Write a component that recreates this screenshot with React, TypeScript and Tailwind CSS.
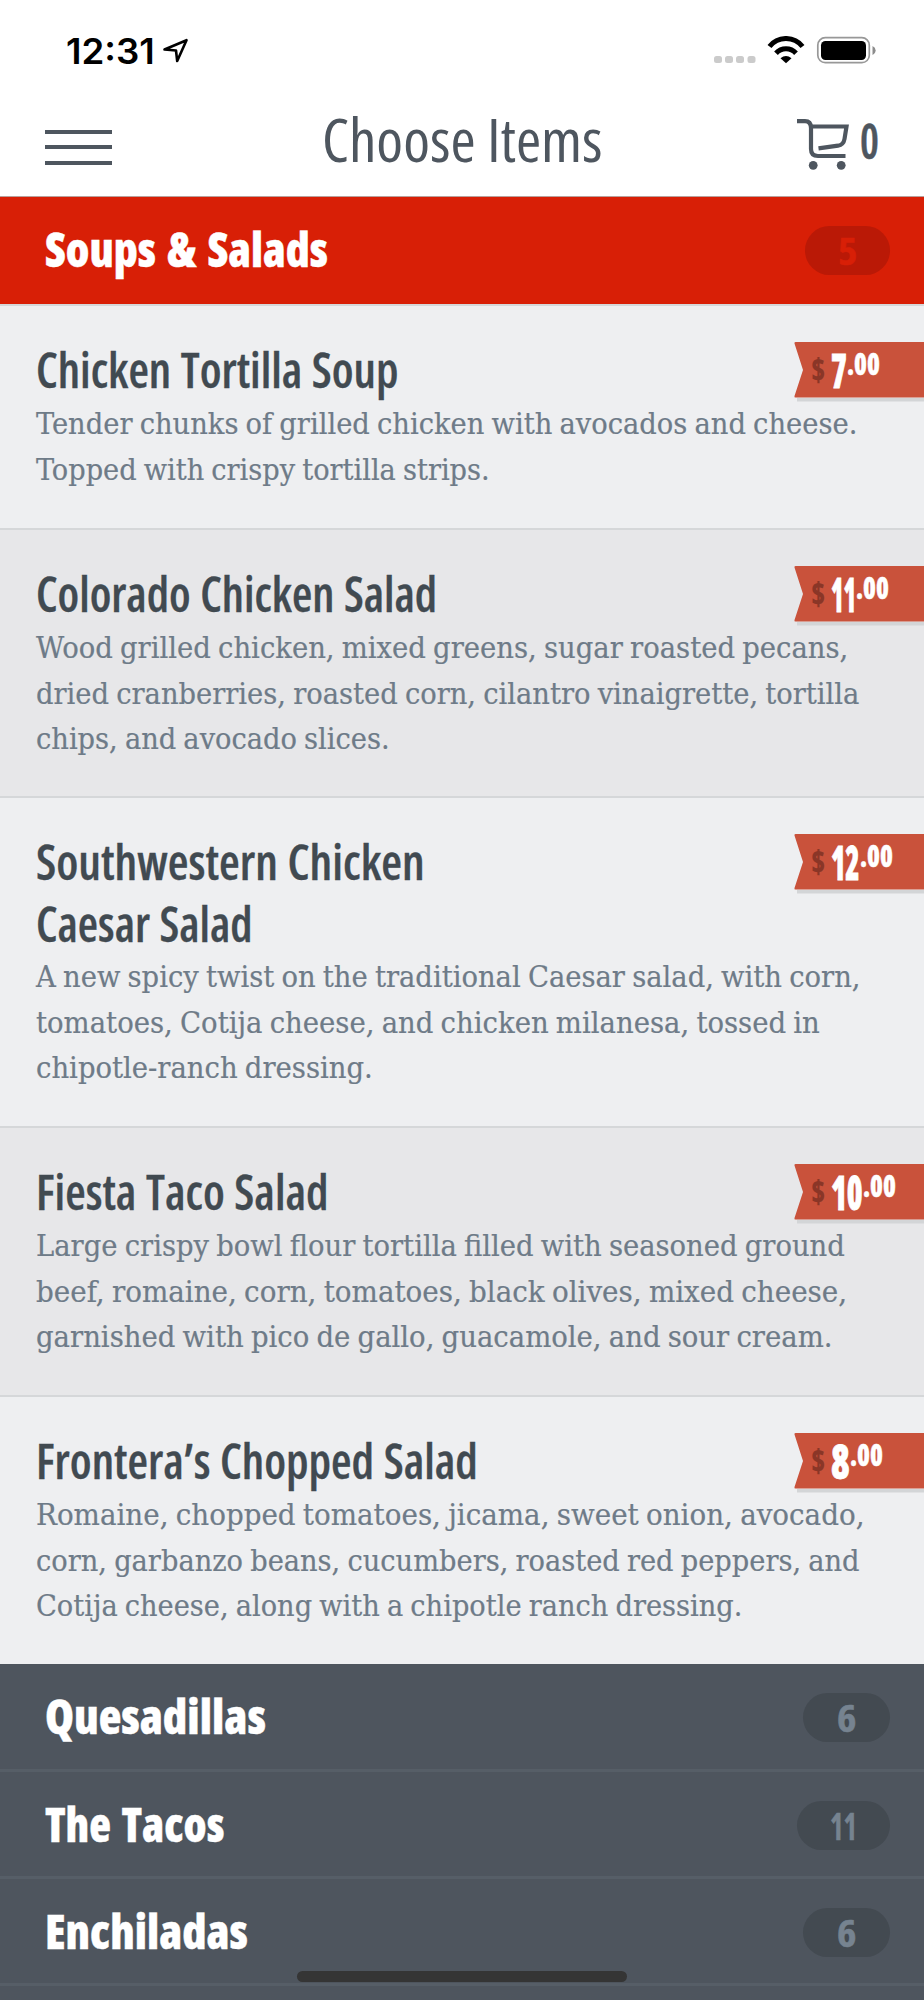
import { useLayoutEffect, useRef, useState } from "react";

type FitProps = { text: string; width: number; className?: string };

/* A single line of text, condensed or widened to an exact width. */
function Fit({ text, width, className = "" }: FitProps) {
  const ref = useRef<HTMLSpanElement>(null);
  const [scale, setScale] = useState(1);
  useLayoutEffect(() => {
    if (ref.current) setScale(width / ref.current.offsetWidth);
  }, [text, width]);
  return (
    <span className="block" style={{ width }}>
      <span
        ref={ref}
        className={`block w-max origin-left whitespace-nowrap ${className}`}
        style={{ transform: `scaleX(${scale})` }}
      >
        {text}
      </span>
    </span>
  );
}

type Line = [string, number];
type Item = { title: Line[]; body: Line[]; dollars: Line; height: string };

const items: Item[] = [
  {
    title: [["Chicken Tortilla Soup", 362]],
    body: [
      ["Tender chunks of grilled chicken with avocados and cheese.", 821],
      ["Topped with crispy tortilla strips.", 454],
    ],
    dollars: ["7", 16],
    height: "h-[224px]",
  },
  {
    title: [["Colorado Chicken Salad", 401]],
    body: [
      ["Wood grilled chicken, mixed greens, sugar roasted pecans,", 812],
      ["dried cranberries, roasted corn, cilantro vinaigrette, tortilla", 823],
      ["chips, and avocado slices.", 354],
    ],
    dollars: ["11", 25],
    height: "h-[268px]",
  },
  {
    title: [
      ["Southwestern Chicken", 389],
      ["Caesar Salad", 217],
    ],
    body: [
      ["A new spicy twist on the traditional Caesar salad, with corn,", 825],
      ["tomatoes, Cotija cheese, and chicken milanesa, tossed in", 784],
      ["chipotle-ranch dressing.", 337],
    ],
    dollars: ["12", 29],
    height: "h-[330px]",
  },
  {
    title: [["Fiesta Taco Salad", 293]],
    body: [
      ["Large crispy bowl flour tortilla filled with seasoned ground", 809],
      ["beef, romaine, corn, tomatoes, black olives, mixed cheese,", 811],
      ["garnished with pico de gallo, guacamole, and sour cream.", 796],
    ],
    dollars: ["10", 32],
    height: "h-[269px]",
  },
  {
    title: [["Frontera’s Chopped Salad", 442]],
    body: [
      ["Romaine, chopped tomatoes, jicama, sweet onion, avocado,", 828],
      ["corn, garbanzo beans, cucumbers, roasted red peppers, and", 824],
      ["Cotija cheese, along with a chipotle ranch dressing.", 706],
    ],
    dollars: ["8", 19],
    height: "h-[269px]",
  },
];

function PriceTag({ dollars }: { dollars: Line }) {
  return (
    <div className="relative h-[60px] w-[130px] shrink-0">
      <svg className="absolute inset-0" width="130" height="60" viewBox="0 0 130 60">
        <path d="M3 56H130V59.5H3z" fill="#d3d5d7" />
        <path d="M1.5 0H130V55.5H1.5Q0 55.5 .5 54L9 28L.5 1.500Q0 0 1.500 0z" fill="#c9523b" />
      </svg>
      <div className="relative flex pl-[17px] font-extrabold font-stretch-condensed">
        <div className="w-[20px] pt-[10px] text-[31px] leading-[34px] text-[#8a3627]">
          <Fit text="$" width={14} />
        </div>
        <div className="pt-[4px] text-[48px] leading-[48px] text-white">
          <Fit text={dollars[0]} width={dollars[1]} className="[-webkit-text-stroke:0.8px_#fff]" />
        </div>
        <div className="pt-[5px] text-[30px] leading-[34px] text-white">
          <Fit text=".00" width={33} className="[-webkit-text-stroke:0.4px_#fff]" />
        </div>
      </div>
    </div>
  );
}

function MenuItem({ item, shaded }: { item: Item; shaded: boolean }) {
  return (
    <li
      className={`flex flex-col border-t-2 border-[#d5d7d9] pl-9 ${item.height} ${
        shaded ? "bg-[#e7e7e9]" : "bg-[#eeeff1]"
      }`}
    >
      <div className="flex justify-between">
        <h3 className="pt-[33px] text-[48px] leading-[62px] font-semibold text-[#414a51] font-stretch-condensed">
          {item.title.map(([t, w]) => (
            <Fit key={t} text={t} width={w} className="[word-spacing:1px] [-webkit-text-stroke:0.3px_#414a51]" />
          ))}
        </h3>
        <div className="pt-9">
          <PriceTag dollars={item.dollars} />
        </div>
      </div>
      <p className="-mt-px font-['DejaVu_Serif',serif] text-[30px] leading-[45.500px] text-[#6e7b88] font-stretch-semi-condensed">
        {item.body.map(([t, w]) => (
          <Fit key={t} text={t} width={w} className="[word-spacing:-1.500px] [-webkit-text-stroke:0.2px_#6e7b88]" />
        ))}
      </p>
    </li>
  );
}

type SectionProps = { title: string; width: number; count: string; tone: string; pill: string };

function SectionRow({ title, width, count, tone, pill }: SectionProps) {
  return (
    <div className={`flex justify-between pr-[34px] pl-[45px] ${tone}`}>
      <h2 className="pt-[19px] text-[48px] leading-[66px] font-extrabold text-white font-stretch-condensed">
        <Fit text={title} width={width} className="[word-spacing:3px] [-webkit-text-stroke:0.4px_#fff]" />
      </h2>
      <span
        className={`mt-[29px] flex h-[48.500px] items-center justify-center rounded-full text-[37px] leading-none font-bold font-stretch-condensed ${pill}`}
      >
        <Fit
          text={count}
          width={count.length > 1 ? 27 : 19}
          className="[-webkit-text-stroke:0.5px_currentColor]"
        />
      </span>
    </div>
  );
}

function StatusBar() {
  return (
    <div className="flex h-[100px] items-start justify-between pt-[30px] pr-[48px] pl-[66px]">
      <div className="flex text-black">
        <div className="font-['Inter',sans-serif] text-[35px] leading-[42px] font-semibold">
          <Fit text="12:31" width={89} />
        </div>
        <svg className="mt-[7px] ml-[7px]" width="28" height="28" viewBox="0 0 28 28">
          <path
            d="M2.500 12.500L24.500 3.200L15.200 24L14 13.500z"
            fill="none"
            stroke="currentColor"
            strokeWidth="2.600"
            strokeLinejoin="round"
          />
        </svg>
      </div>
      <svg className="mt-[6px]" width="164" height="30" viewBox="712 36 164 30">
        <g fill="#cbcbcb">
          <rect x="714" y="56" width="8" height="7" rx="2.500" />
          <rect x="725" y="56" width="8" height="7" rx="2.500" />
          <rect x="736" y="56" width="8" height="7" rx="2.500" />
          <rect x="747.500" y="56" width="8" height="7" rx="2.500" />
        </g>
        <g fill="none" stroke="#000" strokeWidth="5">
          <path d="M769.500 46.500A21 21 0 0 1 802.500 46.500" />
          <path d="M776 53.300A13.500 13.500 0 0 1 796 53.300" />
        </g>
        <path d="M780.500 58.200Q786 53.800 791.500 58.200L786 63.200z" />
        <rect x="817.800" y="37.700" width="51.500" height="25" rx="7.500" fill="#fff" stroke="#989898" strokeWidth="1.700" />
        <rect x="821" y="41" width="45" height="19" rx="4.500" />
        <path d="M872.500 46Q875.600 47.500 875.600 50.300Q875.600 53.500 872.500 55z" fill="#8c8c8c" />
      </svg>
    </div>
  );
}

function NavBar() {
  return (
    <div className="flex h-[97px] justify-between border-b border-[#b9a09c] pr-[45px] pl-[45px] text-[#4e565f]">
      <div className="mt-[29.500px] flex w-[67px] flex-col gap-[11.500px]">
        <i className="block h-[4.200px] bg-current" />
        <i className="block h-[4.200px] bg-current" />
        <i className="block h-[4.200px] bg-current" />
      </div>
      <h1 className="ml-[16px] text-[60px] leading-[78px] font-normal font-stretch-condensed">
        <Fit text="Choose Items" width={281} />
      </h1>
      <div className="flex">
        <svg className="mt-[17px]" width="56" height="54" viewBox="796 117 56 54">
          <g fill="none" stroke="currentColor" strokeWidth="4.200">
            <path d="M797 121.200H805Q811 121.200 811 128V149Q811 156 818 156H845.500" />
            <path d="M811 126.500H846.500L844.500 139Q843.500 144.800 838 145.700L818.500 148.300" />
          </g>
          <circle cx="813.200" cy="165.300" r="4.400" fill="currentColor" />
          <circle cx="841.200" cy="165.300" r="4.400" fill="currentColor" />
        </svg>
        <span className="ml-[8px] pt-[14px] text-[49px] leading-[52px] font-semibold font-stretch-condensed">
          <Fit text="0" width={19} className="[-webkit-text-stroke:0.5px_currentColor]" />
        </span>
      </div>
    </div>
  );
}

const dark = "bg-[#4e555e] border-b-[3px] border-[#565e67]";

export default function App() {
  return (
    <main className="relative flex h-[2000px] w-[924px] flex-col overflow-hidden bg-white font-['Open_Sans','Noto_Sans',sans-serif]">
      <StatusBar />
      <NavBar />
      <SectionRow
        title="Soups & Salads"
        width={283}
        count="5"
        tone="h-[107px] bg-[#d81f06]"
        pill="w-[85px] bg-[#ba1906] text-[#d81f06]"
      />
      <ul>
        {items.map((item, i) => (
          <MenuItem key={i} item={item} shaded={i % 2 === 1} />
        ))}
      </ul>
      <SectionRow title="Quesadillas" width={221} count="6" tone={`h-[108px] ${dark}`} pill="w-[87px] bg-[#434a51] text-[#768390]" />
      <SectionRow title="The Tacos" width={179} count="11" tone={`h-[107px] ${dark}`} pill="w-[93px] bg-[#434a51] text-[#768390]" />
      <SectionRow title="Enchiladas" width={203} count="6" tone={`h-[107px] ${dark}`} pill="w-[87px] bg-[#434a51] text-[#768390]" />
      <div className="grow bg-[#4e555e]" />
      <div className="absolute top-[1971px] left-[297px] h-[11px] w-[330px] rounded-full bg-[#353535]" />
    </main>
  );
}
